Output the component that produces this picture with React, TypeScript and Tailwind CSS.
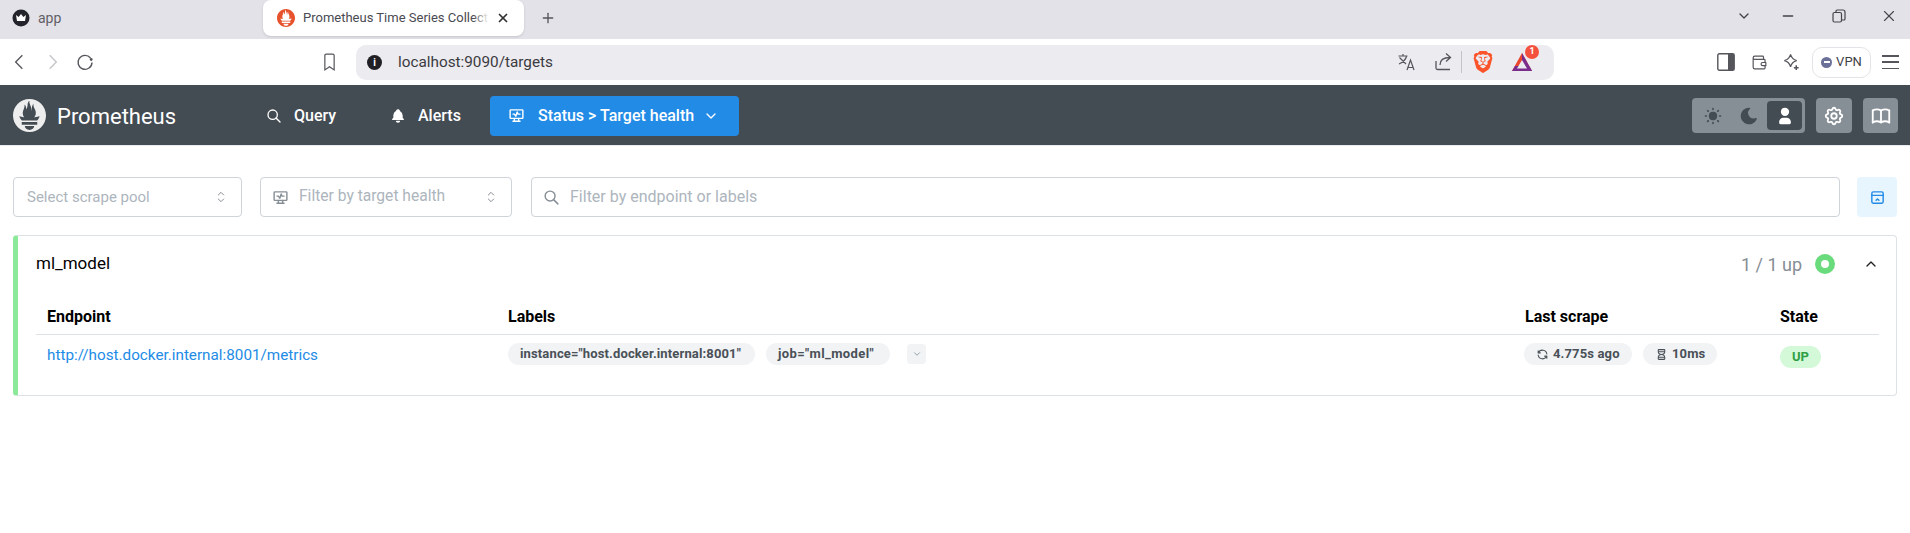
import { SiBrave, SiPrometheus } from "react-icons/si";
import {
	TbBellFilled,
	TbBook,
	TbChevronDown,
	TbChevronUp,
	TbHeartRateMonitor,
	TbHourglass,
	TbLayoutNavbarCollapse,
	TbMoonFilled,
	TbRefresh,
	TbSearch,
	TbSelector,
	TbSettings,
	TbSunFilled,
	TbUserFilled,
	TbWallet,
	TbX,
	TbPlus,
	TbMinus,
} from "react-icons/tb";

function Crown() {
	return (
		<svg viewBox="0 0 18 18" className="w-[18px] h-[18px]">
			<circle cx="9" cy="9" r="8.5" fill="#23232b" />
			<path d="M4 6l2.6 2L9 5l2.4 3L14 6l-1 6H5z" fill="#fff" />
		</svg>
	);
}

function Bat() {
	return (
		<svg viewBox="0 0 22 20" className="w-[22px] h-[20px]">
			<path d="M11 1L1 19h20z" fill="#e8452c" />
			<path d="M1 19l3-5h14l3 5z" fill="#7b2d8e" />
			<path d="M11 1l10 18h-6L11 9z" fill="#7b2d8e" />
			<path d="M11 8l-5 8.5h10z" fill="#ecebf0" />
		</svg>
	);
}

function Pill({ className, children }: { className: string; children: React.ReactNode }) {
	return (
		<span className={`inline-flex items-center h-[22px] rounded-full bg-[#f1f3f5] text-[#495057] text-[13px] font-bold pl-[12px] whitespace-nowrap ${className}`}>
			{children}
		</span>
	);
}

function BrowserChrome() {
	return (
		<>
			<div className="flex items-start h-[39px] bg-[#e3e2e8] text-[#5f5f66]">
				<div className="flex items-center h-[36px] pl-[12px] w-[263px] gap-[8px] text-[14px]">
					<Crown />
					<span>app</span>
				</div>
				<div className="flex items-center w-[261px] h-[36px] bg-white rounded-[8px] pl-[14px] text-[13px] text-[#4a4a52] shadow-sm">
					<SiPrometheus className="w-[18px] h-[18px] text-[#e6522c]" />
					<span className="relative ml-[8px] w-[186px] whitespace-nowrap">
						Prometheus Time Series Collect
						<span className="absolute right-0 top-0 bottom-0 w-[16px] bg-linear-to-r from-transparent to-white" />
					</span>
					<TbX className="ml-[7px] w-[14px] h-[14px] text-[#333]" strokeWidth={3} />
				</div>
				<TbPlus className="ml-[16px] mt-[10px] w-[16px] h-[16px] text-[#55555c]" />
				<div className="flex-1" />
				<div className="flex items-center h-[32px] text-[#44444a]">
					<TbChevronDown className="w-[16px] h-[16px]" />
					<TbMinus className="ml-[28px] w-[16px] h-[16px]" />
					<svg viewBox="0 0 14 14" className="ml-[36px] w-[14px] h-[14px]" fill="none" stroke="currentColor" strokeWidth="1.2">
						<rect x="1" y="3.5" width="8.5" height="9.5" rx="1.5" />
						<path d="M4 3V2.2A1.2 1.2 0 0 1 5.2 1H11a2 2 0 0 1 2 2v6.5A1.2 1.2 0 0 1 11.8 11H10" />
					</svg>
					<TbX className="ml-[34px] mr-[12px] w-[18px] h-[18px]" strokeWidth={1.5} />
				</div>
			</div>
			<div className="flex items-center h-[46px] bg-white text-[#55555c]">
				<svg viewBox="0 0 12 20" className="ml-[14px] w-[10px] h-[18px]" fill="none" stroke="#55555c" strokeWidth="1.6">
					<path d="M10 2L2 10l8 8" />
				</svg>
				<svg viewBox="0 0 12 20" className="ml-[24px] w-[10px] h-[18px]" fill="none" stroke="#c4c4c8" strokeWidth="1.6">
					<path d="M2 2l8 8-8 8" />
				</svg>
				<svg viewBox="0 0 18 18" className="ml-[18px] w-[18px] h-[18px]" fill="none" stroke="#55555c" strokeWidth="1.4">
					<path d="M14.5 5A7 7 0 1 0 16 9.5" />
					<circle cx="15.2" cy="6.5" r="1.4" fill="#55555c" stroke="none" />
				</svg>
				<svg viewBox="0 0 14 20" className="ml-[229px] w-[13px] h-[19px]" fill="none" stroke="#55555c" strokeWidth="1.3">
					<path d="M2 2.5A1.5 1.5 0 0 1 3.5 1h7A1.5 1.5 0 0 1 12 2.5V18l-5-3.5L2 18z" />
				</svg>
				<div className="ml-[20px] flex items-center w-[1198px] h-[35px] bg-[#ecebf0] rounded-[10px] pl-[11px]">
					<span className="flex items-center justify-center w-[15px] h-[15px] rounded-full bg-[#1f1f24] text-white text-[10px] font-bold">i</span>
					<span className="ml-[16px] text-[15.3px] text-[#3a3a40]">localhost:9090/targets</span>
					<div className="flex-1" />
					<svg viewBox="0 0 18 18" className="w-[18px] h-[18px]" fill="none" stroke="#55555c" strokeWidth="1.2">
						<path d="M0.5 3h9M5 1v2M1.500 4.500L8 11M8.500 3.500C7.500 7 4.500 9.500 1 11M9 17l3.500-10L16 17M10 14.500h5" />
					</svg>
					<svg viewBox="0 0 20 20" className="ml-[17px] w-[20px] h-[20px]" fill="none" stroke="#55555c" strokeWidth="1.3">
						<path d="M3 9v7a1.5 1.5 0 0 0 1.5 1.5H17M7 13c0-5 3-7.5 10-7.5M13 1.500l4.500 4-4.500 4" />
					</svg>
					<span className="ml-[8px] w-px h-[22px] bg-[#c2c2c8]" />
					<SiBrave className="ml-[10px] w-[22px] h-[24px] text-[#fb542b]" />
					<div className="relative ml-[17px] mr-[21px]">
						<Bat />
						<span className="absolute -top-[7px] -right-[6px] flex items-center justify-center w-[14px] h-[14px] rounded-full bg-[#f4503e] text-white text-[9px] font-bold">1</span>
					</div>
				</div>
				<div className="flex-1" />
				<svg viewBox="0 0 18 18" className="w-[18px] h-[18px]">
					<rect x="0.8" y="0.8" width="16.4" height="16.4" rx="1.5" fill="none" stroke="#55555c" strokeWidth="1.4" />
					<rect x="11" y="1" width="6" height="16" fill="#55555c" />
				</svg>
				<TbWallet className="ml-[15px] w-[19px] h-[19px]" strokeWidth={1.5} />
				<svg viewBox="0 0 20 20" className="ml-[13px] w-[19px] h-[19px]" fill="none" stroke="#55555c" strokeWidth="1.3">
					<path d="M9 1.500c1 4 2.500 5.500 6.500 6.500-4 1-5.500 2.500-6.500 6.500C8 10.500 6.500 9 2.500 8 6.500 7 8 5.500 9 1.500z" />
					<path d="M15 13v5M12.500 15.500h5" strokeWidth="1.600" />
				</svg>
				<div className="ml-[11px] flex items-center justify-center gap-[4px] w-[59px] h-[31px] border border-[#e4e4e8] rounded-[10px] text-[13px] text-[#3f3f46]">
					<span className="flex items-center justify-center w-[11px] h-[11px] rounded-full bg-[#6b7099]">
						<span className="w-[6px] h-[2px] bg-white" />
					</span>
					VPN
				</div>
				<div className="ml-[11px] mr-[11px] flex flex-col justify-between w-[17px] h-[14px]">
					<span className="h-[1.5px] bg-[#55555c]" />
					<span className="h-[1.5px] bg-[#55555c]" />
					<span className="h-[1.5px] bg-[#55555c]" />
				</div>
			</div>
		</>
	);
}

function AppHeader() {
	return (
		<header className="flex items-center h-[61px] pt-[1px] bg-[#434b53] text-white border-b border-[#e9ecef]">
			<SiPrometheus className="ml-[13px] w-[33px] h-[33px] text-[#eeeeee]" />
			<span className="ml-[11px] pt-[1px] text-[22px] w-[209px]">Prometheus</span>
			<div className="flex items-center gap-[12px] w-[124px] text-[16px] font-medium">
				<TbSearch className="w-[16px] h-[16px]" />
				<span className="pt-[1px]">Query</span>
			</div>
			<div className="flex items-center gap-[12px] w-[100px] text-[16px] font-medium">
				<TbBellFilled className="w-[16px] h-[16px]" />
				<span className="pt-[1px]">Alerts</span>
			</div>
			<div className="flex items-center h-[40px] w-[249px] bg-[#228be6] rounded-[4px] pl-[18px] text-[16px] font-medium">
				<TbHeartRateMonitor className="w-[17px] h-[17px]" />
				<span className="ml-[13px] pt-[1px]">Status &gt; Target health</span>
				<TbChevronDown className="ml-[9px] w-[16px] h-[16px]" />
			</div>
			<div className="flex-1" />
			<div className="flex items-center h-[35px] w-[113px] bg-[#868e96] rounded-[4px]">
				<TbSunFilled className="ml-[11px] w-[20px] h-[20px] text-[#434b53]" />
				<TbMoonFilled className="ml-[16px] w-[20px] h-[20px] text-[#434b53]" />
				<span className="ml-[8px] flex items-center justify-center w-[35px] h-[29px] bg-[#434b53] rounded-[4px]">
					<TbUserFilled className="w-[20px] h-[20px]" />
				</span>
			</div>
			<span className="ml-[11px] flex items-center justify-center w-[36px] h-[35px] bg-[#868e96] rounded-[4px]">
				<TbSettings className="w-[22px] h-[22px]" />
			</span>
			<span className="ml-[11px] mr-[12px] flex items-center justify-center w-[35px] h-[35px] bg-[#868e96] rounded-[4px]">
				<TbBook className="w-[22px] h-[22px]" />
			</span>
		</header>
	);
}

function Filters() {
	return (
		<div className="flex items-center h-[40px] mt-[31px] mx-[13px] text-[16px] text-[#adb5bd]">
			<div className="flex items-center justify-between w-[229px] h-full border border-[#ced4da] rounded-[4px] pl-[13px] pr-[12px] text-[15px]">
				Select scrape pool
				<TbSelector className="w-[16px] h-[16px] text-[#868e96]" strokeWidth={1.5} />
			</div>
			<div className="ml-[18px] flex items-center w-[252px] h-full border border-[#ced4da] rounded-[4px] pl-[11px] pr-[12px]">
				<TbHeartRateMonitor className="w-[17px] h-[17px] text-[#868e96]" />
				<span className="ml-[10px] text-[15.6px]">Filter by target health</span>
				<div className="flex-1" />
				<TbSelector className="w-[16px] h-[16px] text-[#868e96]" strokeWidth={1.5} />
			</div>
			<div className="ml-[19px] flex items-center flex-1 h-full border border-[#ced4da] rounded-[4px] pl-[11px]">
				<TbSearch className="w-[17px] h-[17px] text-[#868e96]" />
				<span className="ml-[10px]">Filter by endpoint or labels</span>
			</div>
			<span className="ml-[17px] flex items-center justify-center w-[40px] h-full bg-[#e7f5ff] rounded-[4px]">
				<TbLayoutNavbarCollapse className="w-[17px] h-[17px] text-[#228be6]" />
			</span>
		</div>
	);
}

function PoolCard() {
	return (
		<div className="mt-[18px] mx-[13px] h-[161px] border border-[#dee2e6] border-l-[5px] border-l-[#8ce99a] rounded-[4px] bg-white">
			<div className="flex items-center h-[56px] pl-[18px] pr-[17px]">
				<span className="text-[17px] text-black">ml_model</span>
				<div className="flex-1" />
				<span className="text-[18px] text-[#868e96]">1 / 1 up</span>
				<span className="ml-[13px] w-[20px] h-[20px] rounded-full border-[6px] border-[#69db7c]" />
				<TbChevronUp className="ml-[28px] w-[16px] h-[16px] text-[#222]" />
			</div>
			<div className="ml-[18px] mr-[17px]">
				<div className="flex items-center h-[43px] pt-[7px] border-b border-[#dee2e6] text-[16px] font-bold text-black">
					<span className="w-[472px] pl-[11px]">Endpoint</span>
					<span className="w-[1017px]">Labels</span>
					<span className="w-[255px]">Last scrape</span>
					<span>State</span>
				</div>
				<div className="flex items-start pt-[8px]">
					<a className="w-[472px] pl-[11px] pt-[1px] text-[15.250px] text-[#228be6] leading-[22px]">http://host.docker.internal:8001/metrics</a>
					<div className="flex items-center w-[1016px] gap-[11px]">
						<Pill className="w-[247px] tracking-[0.14px]">instance="host.docker.internal:8001"</Pill>
						<Pill className="w-[124px] tracking-[0.4px]">job="ml_model"</Pill>
						<span className="ml-[6px] flex items-center justify-center w-[19px] h-[20px] bg-[#f1f3f5] rounded-[4px]">
							<TbChevronDown className="w-[10px] h-[10px] text-[#868e96]" />
						</span>
					</div>
					<div className="flex items-center w-[256px] gap-[11px]">
						<Pill className="w-[108px] tracking-[0.14px]">
							<TbRefresh className="w-[13px] h-[13px] mr-[4px]" />
							4.775s ago
						</Pill>
						<Pill className="w-[74px] tracking-[0.14px]">
							<TbHourglass className="w-[13px] h-[13px] mr-[4px]" />
							10ms
						</Pill>
					</div>
					<span className="mt-[3px] inline-flex items-center justify-center w-[41px] h-[22px] rounded-full bg-[#d3f9d8] text-[#2f9e44] text-[13px] font-bold">UP</span>
				</div>
			</div>
		</div>
	);
}

export default function App() {
	return (
		<div className="min-h-[533px] bg-white font-['Roboto',sans-serif]">
			<BrowserChrome />
			<AppHeader />
			<Filters />
			<PoolCard />
		</div>
	);
}
